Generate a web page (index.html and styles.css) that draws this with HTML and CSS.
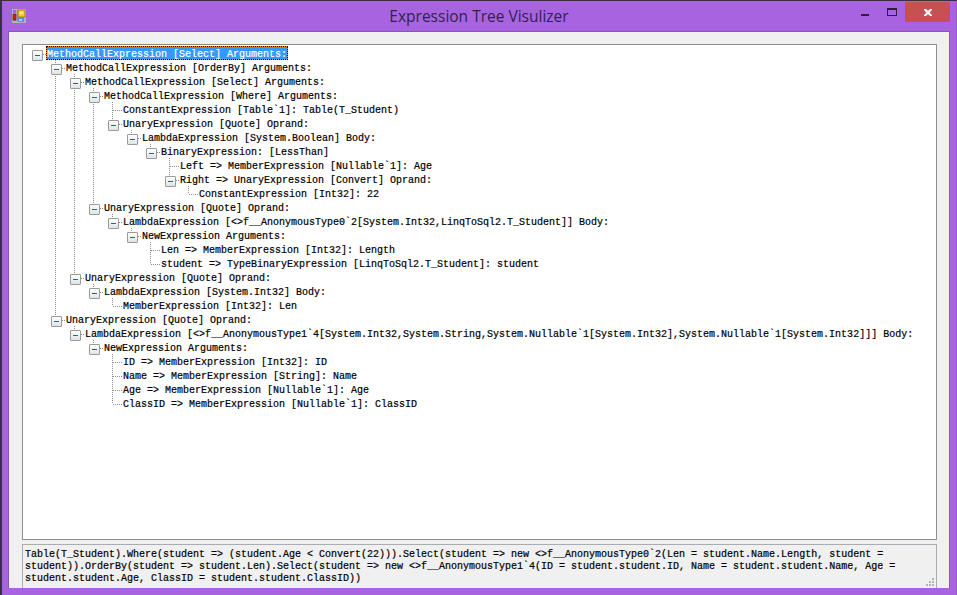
FILE: index.html
```html
<!DOCTYPE html>
<html lang="en">
<head>
<meta charset="utf-8">
<title>Expression Tree Visulizer</title>
<link rel="stylesheet" href="styles.css">
</head>
<body>
<div class="window">
  <header class="titlebar">
    <svg class="app-icon" width="14" height="14" viewBox="0 0 14 14" aria-hidden="true">
      <rect x="0.5" y="0.5" width="13" height="13" fill="none" stroke="#b3b3b3"/>
      <rect x="1" y="1" width="12" height="12" fill="#a864e0"/>
      <path d="M0 4.500H14M4.500 0V14M0 12.500H14M12.500 0V14" stroke="#b3b3b3" fill="none"/>
      <rect x="6" y="1" width="7" height="7" fill="#f5c518" stroke="#a8861a"/>
      <rect x="7.500" y="2.500" width="4" height="3" fill="#ffe680"/>
      <rect x="1" y="5" width="3" height="6" fill="#c8241c" stroke="#7c1410" stroke-width="0.6"/>
      <rect x="6" y="9" width="6" height="4" fill="#4d96e0"/>
      <rect x="7" y="10" width="3" height="2" fill="#a8d0f5"/>
    </svg>
    <h1 class="title">Expression Tree Visulizer</h1>
    <div class="controls">
      <span class="ctl ctl-min"><i class="min-bar"></i></span>
      <span class="ctl ctl-max"><i class="max-box"></i></span>
      <span class="ctl ctl-close">
        <svg width="8" height="7" viewBox="0 0 8 7" aria-hidden="true"><path d="M0 0h2l2 2 2-2h2v1L5.500 3.500 8 6v1H6L4 5 2 7H0V6l2.500-2.500L0 1z" fill="#fff"/></svg>
      </span>
    </div>
  </header>
  <main class="client">
    <section class="treeview">
      <ul class="tree root">
        <li><div class="row open"><span class="label selected">MethodCallExpression [Select] Arguments:</span></div>
          <ul class="tree">
            <li><div class="row open"><span class="label">MethodCallExpression [OrderBy] Arguments:</span></div>
              <ul class="tree">
                <li><div class="row open"><span class="label">MethodCallExpression [Select] Arguments:</span></div>
                  <ul class="tree">
                    <li><div class="row open"><span class="label">MethodCallExpression [Where] Arguments:</span></div>
                      <ul class="tree">
                        <li><div class="row"><span class="label">ConstantExpression [Table`1]: Table(T_Student)</span></div></li>
                        <li><div class="row open"><span class="label">UnaryExpression [Quote] Oprand:</span></div>
                          <ul class="tree">
                            <li><div class="row open"><span class="label">LambdaExpression [System.Boolean] Body:</span></div>
                              <ul class="tree">
                                <li><div class="row open"><span class="label">BinaryExpression: [LessThan]</span></div>
                                  <ul class="tree">
                                    <li><div class="row"><span class="label">Left =&gt; MemberExpression [Nullable`1]: Age</span></div></li>
                                    <li><div class="row open"><span class="label">Right =&gt; UnaryExpression [Convert] Oprand:</span></div>
                                      <ul class="tree">
                                        <li><div class="row"><span class="label">ConstantExpression [Int32]: 22</span></div></li>
                                      </ul>
                                    </li>
                                  </ul>
                                </li>
                              </ul>
                            </li>
                          </ul>
                        </li>
                      </ul>
                    </li>
                    <li><div class="row open"><span class="label">UnaryExpression [Quote] Oprand:</span></div>
                      <ul class="tree">
                        <li><div class="row open"><span class="label">LambdaExpression [&lt;&gt;f__AnonymousType0`2[System.Int32,LinqToSql2.T_Student]] Body:</span></div>
                          <ul class="tree">
                            <li><div class="row open"><span class="label">NewExpression Arguments:</span></div>
                              <ul class="tree">
                                <li><div class="row"><span class="label">Len =&gt; MemberExpression [Int32]: Length</span></div></li>
                                <li><div class="row"><span class="label">student =&gt; TypeBinaryExpression [LinqToSql2.T_Student]: student</span></div></li>
                              </ul>
                            </li>
                          </ul>
                        </li>
                      </ul>
                    </li>
                  </ul>
                </li>
                <li><div class="row open"><span class="label">UnaryExpression [Quote] Oprand:</span></div>
                  <ul class="tree">
                    <li><div class="row open"><span class="label">LambdaExpression [System.Int32] Body:</span></div>
                      <ul class="tree">
                        <li><div class="row"><span class="label">MemberExpression [Int32]: Len</span></div></li>
                      </ul>
                    </li>
                  </ul>
                </li>
              </ul>
            </li>
            <li><div class="row open"><span class="label">UnaryExpression [Quote] Oprand:</span></div>
              <ul class="tree">
                <li><div class="row open"><span class="label">LambdaExpression [&lt;&gt;f__AnonymousType1`4[System.Int32,System.String,System.Nullable`1[System.Int32],System.Nullable`1[System.Int32]]] Body:</span></div>
                  <ul class="tree">
                    <li><div class="row open"><span class="label">NewExpression Arguments:</span></div>
                      <ul class="tree">
                        <li><div class="row"><span class="label">ID =&gt; MemberExpression [Int32]: ID</span></div></li>
                        <li><div class="row"><span class="label">Name =&gt; MemberExpression [String]: Name</span></div></li>
                        <li><div class="row"><span class="label">Age =&gt; MemberExpression [Nullable`1]: Age</span></div></li>
                        <li><div class="row"><span class="label">ClassID =&gt; MemberExpression [Nullable`1]: ClassID</span></div></li>
                      </ul>
                    </li>
                  </ul>
                </li>
              </ul>
            </li>
          </ul>
        </li>
      </ul>
    </section>
    <section class="output">
      <p class="output-text">Table(T_Student).Where(student =&gt; (student.Age &lt; Convert(22))).Select(student =&gt; new &lt;&gt;f__AnonymousType0`2(Len = student.Name.Length, student = student)).OrderBy(student =&gt; student.Len).Select(student =&gt; new &lt;&gt;f__AnonymousType1`4(ID = student.student.ID, Name = student.student.Name, Age = student.student.Age, ClassID = student.student.ClassID))</p>
      <span class="grip"></span>
    </section>
  </main>
</div>
</body>
</html>
```

FILE: styles.css
```css
* { box-sizing: border-box; }
html, body { margin: 0; padding: 0; }
body { width: 957px; height: 595px; overflow: hidden; }

.window {
  width: 957px;
  height: 595px;
  background: #a864e0;
  border-top: 1px solid #3c3040;
  border-left: 2px solid #3c3040;
  border-right: 1px solid #9a58d0;
  display: flex;
  flex-direction: column;
  padding: 0 6px 7px 6px;
}

.titlebar {
  position: relative;
  height: 30px;
  flex: none;
  display: flex;
  justify-content: center;
}
.app-icon { position: absolute; left: 4px; top: 8px; }
.title {
  margin: 0;
  padding-top: 5px;
  font: 400 15.5px/20px "Open Sans", "Noto Sans", sans-serif;
  color: #33224d;
}
.controls { position: absolute; right: 0; top: 1px; display: flex; height: 20px; }
.ctl { display: block; position: relative; }
.ctl-min { width: 26px; }
.ctl-max { width: 28px; }
.ctl-close {
  width: 45px;
  background: #c75050;
  display: flex;
  align-items: center;
  justify-content: center;
}
.min-bar { position: absolute; left: 10px; top: 12px; width: 8px; height: 2px; background: #2e1f3d; }
.max-box { position: absolute; left: 10px; top: 6px; width: 10px; height: 8px; border: 1px solid #2e1f3d; border-top-width: 2px; }

.client {
  flex: 1;
  background: #f0f0f0;
  border: 1px solid #8d52bf;
  border-bottom: 0;
  padding: 12px 12px 0 13px;
  display: flex;
  flex-direction: column;
  gap: 4px;
  min-height: 0;
}

.treeview {
  height: 496px;
  flex: none;
  background: #fff;
  border: 1px solid #8a8f96;
  padding: 1px 0 0 9px;
  overflow: hidden;
}

.tree { list-style: none; margin: 0; padding: 0 0 0 19px; }
.tree.root { padding-left: 0; }
.tree > li { position: relative; }
.tree > li::before {
  content: "";
  position: absolute;
  left: 4px;
  top: 0;
  bottom: 0;
  width: 1px;
  background: repeating-linear-gradient(to bottom, #8c8c8c 0 1px, transparent 1px 2px);
}
.tree > li:last-child::before { bottom: auto; height: 7px; }
.tree.root > li::before { display: none; }

.row {
  position: relative;
  height: 14px;
  padding-left: 14px;
  display: flex;
  align-items: flex-start;
}
.row::before {
  content: "";
  position: absolute;
  left: 5px;
  top: 8px;
  width: 9px;
  height: 1px;
  background: repeating-linear-gradient(to right, #8c8c8c 0 1px, transparent 1px 2px);
}
.row.open::after {
  content: "";
  position: absolute;
  left: 0;
  top: 4px;
  width: 9px;
  height: 9px;
  border: 1px solid #9a9a9a;
  border-radius: 1px;
  background: linear-gradient(#2f55cc, #2f55cc) center / 5px 1px no-repeat, linear-gradient(#fff, #dfe3e8);
}
.label {
  display: block;
  height: 14px;
  padding: 2px 1px 0;
  white-space: nowrap;
  font: 10px/14px "Liberation Mono", monospace;
  color: #000;
  -webkit-text-stroke: 0.2px currentColor;
}
.label.selected {
  background: #3399ff;
  color: #fff;
  box-shadow: inset 0 0 0 1px #f09020;
  outline: 1px dotted #000;
  outline-offset: -1px;
}

.output {
  position: relative;
  flex: 1;
  min-height: 0;
  background: #f0f0f0;
  border: 1px solid #a9adb3;
  border-bottom: 0;
  padding: 4px 1px 0 2px;
}
.output-text {
  margin: 0;
  font: 10px/12px "Liberation Mono", monospace;
  color: #000;
  -webkit-text-stroke: 0.2px currentColor;
}
.grip {
  position: absolute;
  right: 0;
  bottom: 0;
  width: 10px;
  height: 10px;
  background:
    linear-gradient(#b4b4b4, #b4b4b4) 6px 0 / 2px 2px no-repeat,
    linear-gradient(#b4b4b4, #b4b4b4) 3px 3px / 2px 2px no-repeat,
    linear-gradient(#b4b4b4, #b4b4b4) 6px 3px / 2px 2px no-repeat,
    linear-gradient(#b4b4b4, #b4b4b4) 0 6px / 2px 2px no-repeat,
    linear-gradient(#b4b4b4, #b4b4b4) 3px 6px / 2px 2px no-repeat,
    linear-gradient(#b4b4b4, #b4b4b4) 6px 6px / 2px 2px no-repeat;
}
```
